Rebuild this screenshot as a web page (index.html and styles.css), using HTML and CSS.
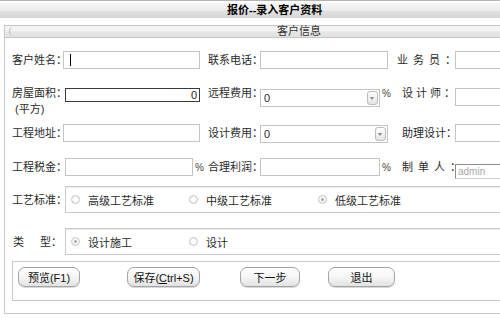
FILE: index.html
```html
<!DOCTYPE html>
<html lang="zh-CN">
<head>
    <meta charset="UTF-8">
    <title>报价--录入客户资料</title>
    <link rel="stylesheet" href="styles.css">
</head>
<body>
    <div class="page">
        <div class="titlebar">报价--录入客户资料</div>

        <div class="frame">
            <div class="subbar"><div class="subbar-inner">客户信息</div></div>

            <div class="row r1">
                <span class="lbl c1">客户姓名：</span>
                <span class="fld c2"><span class="caret"><input class="txt" style="width:137px"></span></span>
                <span class="lbl c3">联系电话：</span>
                <span class="fld c4"><input class="txt" style="width:128px"></span>
                <span class="lbl c5 wide">业务员：</span>
                <span class="fld c6"><input class="txt" style="width:120px"></span>
            </div>

            <div class="row r2">
                <span class="lbl c1">房屋面积：<br><span class="unit">(平方)</span></span>
                <span class="fld c2"><input class="txt area" value="0" style="width:135px"></span>
                <span class="lbl c3">远程费用：</span>
                <span class="fld c4">
                    <span class="sel" style="width:120px">0<span class="arrow"></span></span>
                    <span class="pct">%</span>
                </span>
                <span class="lbl c5 p5 mid">设计师：</span>
                <span class="fld c6"><input class="txt" style="width:120px"></span>
            </div>

            <div class="row r3">
                <span class="lbl c1">工程地址：</span>
                <span class="fld c2"><input class="txt" style="width:137px"></span>
                <span class="lbl c3">设计费用：</span>
                <span class="fld c4"><span class="sel" style="width:128px">0<span class="arrow"></span></span></span>
                <span class="lbl c5 p5">助理设计：</span>
                <span class="fld c6"><input class="txt" style="width:120px"></span>
            </div>

            <div class="row r4">
                <span class="lbl c1">工程税金：</span>
                <span class="fld c2"><input class="txt" style="width:128px;margin-left:2px"><span class="pct">%</span></span>
                <span class="lbl c3">合理利润：</span>
                <span class="fld c4"><input class="txt" style="width:120px"><span class="pct">%</span></span>
                <span class="lbl c5 p5 wide">制单人：</span>
                <span class="fld c6"><input class="txt ro" value="admin" readonly style="width:120px"></span>
            </div>

            <div class="row r5">
                <span class="lbl c1">工艺标准：</span>
                <div class="opts">
                    <label class="opt o1"><span class="radio"></span>高级工艺标准</label>
                    <label class="opt o2"><span class="radio"></span>中级工艺标准</label>
                    <label class="opt"><span class="radio on"></span>低级工艺标准</label>
                </div>
            </div>

            <div class="row r6">
                <span class="lbl c1"><span class="gap">类</span>型：</span>
                <div class="opts">
                    <label class="opt o1"><span class="radio on"></span>设计施工</label>
                    <label class="opt"><span class="radio"></span>设计</label>
                </div>
            </div>

            <div class="actions">
                <button class="btn b1">预览(F1)</button>
                <button class="btn b2">保存(<u>C</u>trl+S)</button>
                <button class="btn b3">下一步</button>
                <button class="btn b4">退出</button>
            </div>
        </div>
    </div>
</body>
</html>
```

FILE: styles.css
```css
body {
    margin: 0;
    background: #fff;
    overflow: hidden;
    font-family: "Liberation Sans", "Noto Sans CJK SC", sans-serif;
    font-size: 11px;
    color: #2a2a2a;
}

.page {
    width: 620px;
    border-top: 1px solid #b4b4b4;
    padding-top: 2px;
}

.titlebar {
    height: 15px;
    line-height: 15px;
    padding-left: 227px;
    font-weight: bold;
    color: #000;
    background: linear-gradient(#f4f4f4 0, #efefef 45%, #e2e2e2 55%, #d4d4d4 100%);
}

.frame {
    margin: 7px 0 0 4px;
    border-left: 1px solid #c8c8c8;
    border-bottom: 1px solid #c8c8c8;
    padding-bottom: 12px;
}

.subbar {
    height: 11px;
    border-top: 1px solid #c6c6c6;
    border-bottom: 1px solid #c6c6c6;
    background: linear-gradient(#f4f4f4 0, #f2f2f2 45%, #e6e6e6 55%, #e2e2e2 100%);
}

.subbar-inner {
    height: 9px;
    margin: 1px 0 0 4px;
    border-left: 1px solid #b8b8b8;
    border-radius: 5px 0 0 5px;
    line-height: 9px;
    padding-left: 267px;
    color: #333;
}

.row {
    display: flex;
    align-items: center;
}

.r1 { height: 44px; }
.r2 { height: 31px; align-items: flex-start; }
.r3 { height: 40px; }
.r4 { height: 28px; }
.r5 { height: 27px; margin-top: 5px; }
.r6 { height: 27px; margin-top: 15px; }

.lbl {
    flex: none;
    white-space: nowrap;
    line-height: 16px;
    box-sizing: border-box;
}

.fld {
    flex: none;
    display: flex;
    align-items: center;
    box-sizing: border-box;
}

.c1 { width: 58px; padding-left: 7px; }
.c2 { width: 142px; }
.c3 { width: 55px; padding-left: 3px; }
.c4 { width: 137px; }
.c5 { width: 58px; }
.c6 { width: 140px; }

.p5 { padding-left: 5px; }
.wide { letter-spacing: 5px; }
.mid { letter-spacing: 3px; }

.r2 .lbl { margin-top: 3px; }
.r2 .fld { margin-top: 6px; align-items: flex-start; }
.r2 .pct { margin-top: 0; }
.unit { padding-left: 3px; }

.gap { margin-right: 16px; padding-left: 1px; }

.txt {
    box-sizing: border-box;
    height: 18px;
    margin: 0;
    padding: 0 3px;
    border: 1px solid #c4c4c4;
    background: #fff;
    font: 11px "Liberation Sans", sans-serif;
    color: #222;
    outline: none;
}

.txt.area {
    height: 14px;
    margin-left: 2px;
    border-color: #3a3a3a;
    text-align: right;
    padding-right: 2px;
}

.txt.ro {
    height: 15px;
    border-color: #8c8c8c #d0d0d0 #d0d0d0 #8c8c8c;
    color: #a8a8a8;
    font-size: 10px;
    padding-left: 2px;
    align-self: flex-start;
    margin-top: 9px;
}

.caret {
    position: relative;
    display: flex;
}

.caret::after {
    content: "";
    position: absolute;
    left: 7px;
    top: 3px;
    width: 1px;
    height: 12px;
    background: #000;
}

.pct {
    margin-left: 2px;
    color: #444;
    font-size: 10px;
}

.sel {
    box-sizing: border-box;
    height: 18px;
    margin-top: 1px;
    border: 1px solid #c4c4c4;
    background: #fff;
    display: flex;
    align-items: center;
    justify-content: space-between;
    padding: 0 1px 0 3px;
    font-family: "Liberation Sans", sans-serif;
}

.arrow {
    width: 9px;
    height: 12px;
    border: 1px solid #bcbcbc;
    border-radius: 3px;
    background: linear-gradient(#fdfdfd, #e4e4e4);
    position: relative;
}

.arrow::after {
    content: "";
    position: absolute;
    left: 2px;
    top: 5px;
    border-left: 2.5px solid transparent;
    border-right: 2.5px solid transparent;
    border-top: 3px solid #888;
}

.opts {
    flex: 1;
    height: 27px;
    margin-left: 2px;
    box-sizing: border-box;
    border: 1px solid #cacaca;
    box-shadow: inset 0 1px 0 #ececec;
    display: flex;
    align-items: center;
    padding-left: 5px;
}

.opt {
    display: flex;
    align-items: center;
    white-space: nowrap;
}

.o1 { width: 118px; }
.o2 { width: 129px; }

.radio {
    width: 9px;
    height: 9px;
    box-sizing: border-box;
    border: 1px solid #c6c6c6;
    border-radius: 50%;
    background: radial-gradient(#ffffff 30%, #e6e6e6 100%);
    margin-right: 8px;
    position: relative;
}

.radio.on::after {
    content: "";
    position: absolute;
    left: 2px;
    top: 2px;
    width: 3px;
    height: 3px;
    border-radius: 50%;
    background: #a6a6a6;
}

.actions {
    height: 40px;
    margin: 6px 0 0 7px;
    box-sizing: border-box;
    border: 1px solid #cacaca;
    padding: 5px 0 0 5px;
    display: flex;
    align-items: flex-start;
}

.btn {
    height: 20px;
    padding: 0;
    border: 1px solid #a4a4a4;
    border-radius: 7px;
    background: linear-gradient(#ffffff 0, #f6f6f6 50%, #e2e2e2 100%);
    box-shadow: 0 1px 0 #d8d8d8;
    font: 11px "Liberation Sans", "Noto Sans CJK SC", sans-serif;
    color: #111;
    cursor: pointer;
}

.b1 { width: 62px; margin-right: 47px; }
.b2 { width: 73px; margin-right: 40px; }
.b3 { width: 60px; margin-right: 28px; }
.b4 { width: 67px; }
```
